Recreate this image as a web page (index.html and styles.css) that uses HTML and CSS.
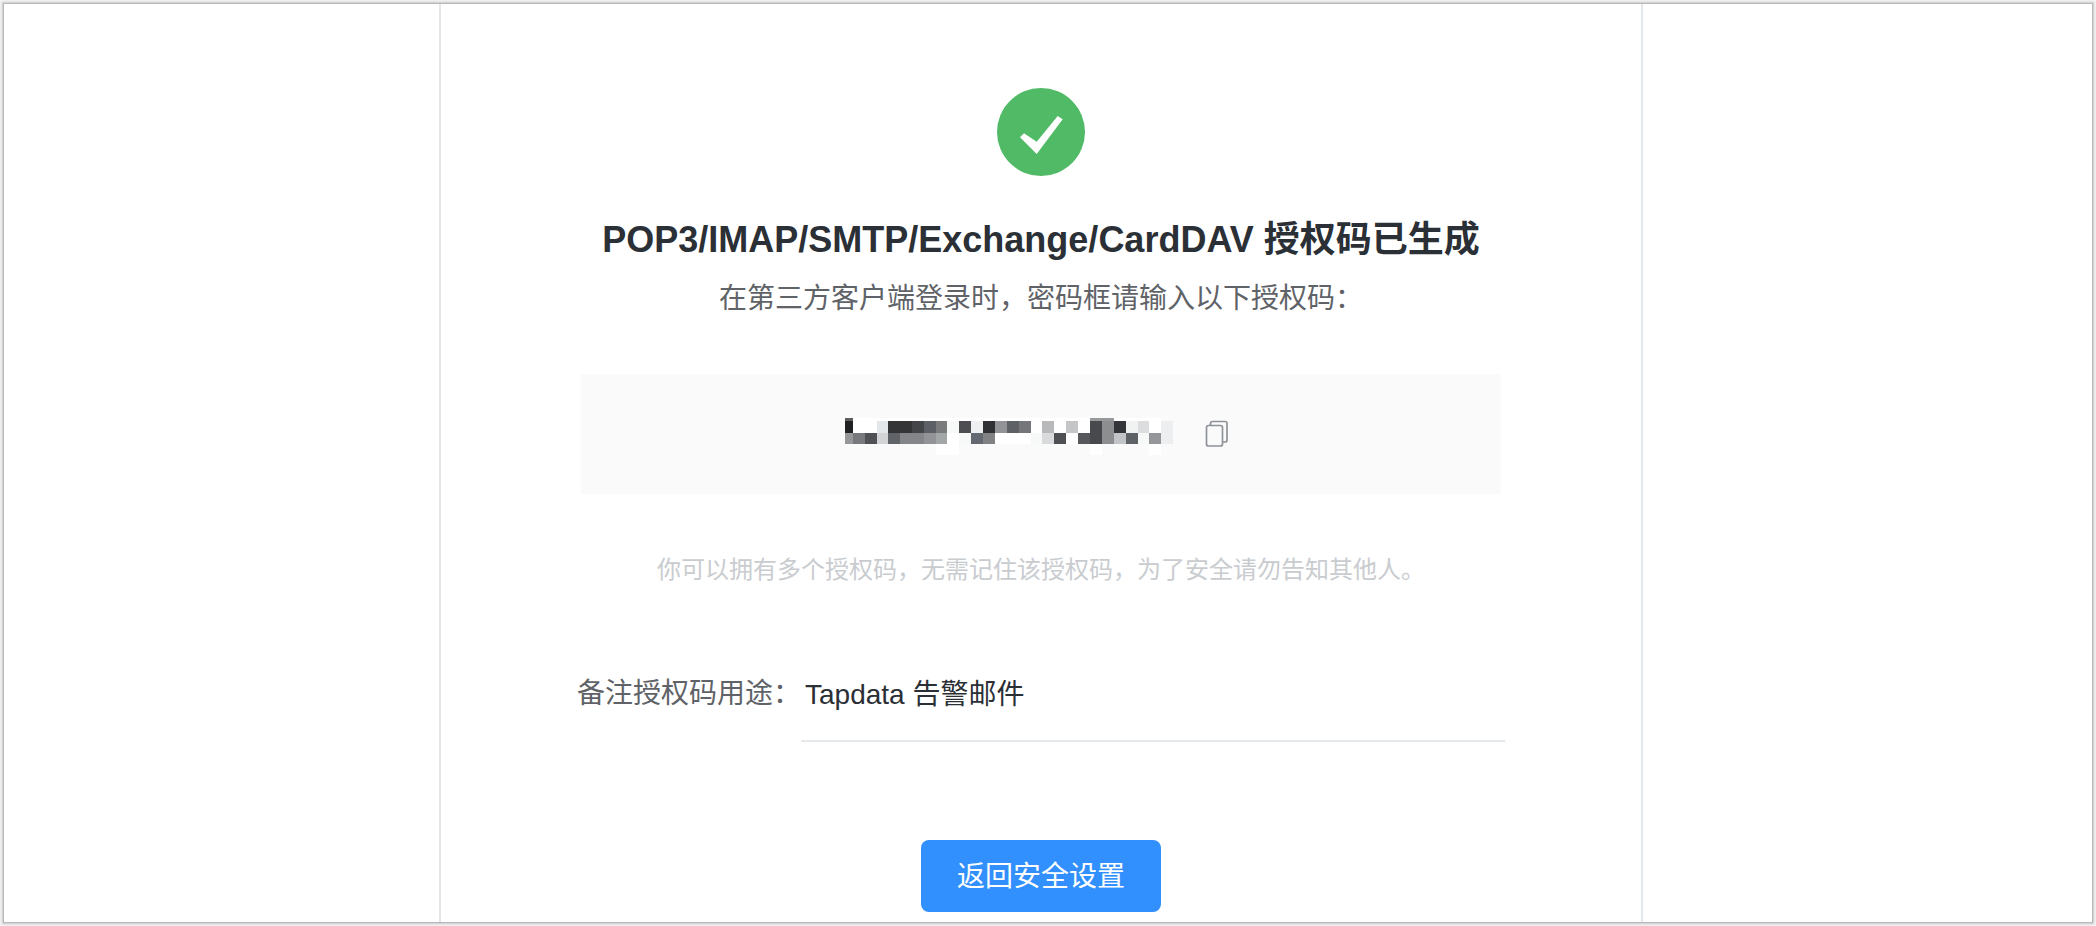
FILE: index.html
```html
<!DOCTYPE html>
<html lang="zh-CN">
<head>
<meta charset="utf-8">
<title>授权码已生成</title>
<link rel="stylesheet" href="styles.css">
</head>
<body>
<div class="window">
  <main class="card">
    <svg class="status" viewBox="0 0 88 88" aria-hidden="true">
      <circle cx="44" cy="44" r="44" fill="#50ba66"/>
      <path d="M23 49.3 27 45.3 39.7 53.7 60.7 28 65.7 31.3 39.7 66Z" fill="#fff"/>
    </svg>
    <h1 class="title">POP3/IMAP/SMTP/Exchange/CardDAV 授权码已生成</h1>
    <p class="subtitle">在第三方客户端登录时，密码框请输入以下授权码：</p>
    <div class="code">
      <svg class="code-mask" viewBox="0 -6 329 44" shape-rendering="crispEdges" role="img" aria-label="授权码">
        <path fill="#fff" d="M8 0H317V26H8ZM92 26H115V37H92ZM246 26H258V37H246ZM305 26H317V37H305Z"/>
        <path fill="#f7f8f8" d="M103 3H115V15H103ZM115 15H127V26H115ZM187 15H198V26H187ZM294 15H305V26H294Z"/>
        <path fill="#5c5e60" d="M1 0H9V3H1Z"/><path fill="#202122" d="M1 3H9V15H1Z"/>
        <path fill="#969799" d="M1 15H9V26H1Z"/><path fill="#77797c" d="M9 15H21V26H9Z"/><path fill="#4f5154" d="M21 15H33V26H21Z"/>
        <path fill="#e4e7ea" d="M33 3H44V15H33Z"/><path fill="#d3d4d6" d="M33 15H44V26H33Z"/>
        <path fill="#343537" d="M44 3H68V15H44Z"/><path fill="#444548" d="M68 3H80V15H68Z"/><path fill="#5d5f66" d="M80 3H92V15H80Z"/><path fill="#797b7d" d="M92 3H103V15H92Z"/>
        <path fill="#606468" d="M44 15H56V26H44Z"/><path fill="#838588" d="M56 15H80V26H56Z"/><path fill="#929397" d="M80 15H92V26H80Z"/><path fill="#a2a6a7" d="M92 15H103V26H92Z"/>
        <path fill="#4c4e51" d="M115 3H127V15H115Z"/><path fill="#eef0f2" d="M127 3H139V15H127Z"/><path fill="#303134" d="M139 3H151V15H139Z"/><path fill="#929396" d="M151 3H163V15H151Z"/><path fill="#5e6267" d="M163 3H175V15H163Z"/><path fill="#747679" d="M175 3H187V15H175Z"/>
        <path fill="#646870" d="M127 15H139V26H127Z"/><path fill="#808284" d="M139 15H151V26H139Z"/>
        <path fill="#b7b9ba" d="M198 3H210V15H198Z"/><path fill="#d9dadc" d="M198 15H210V26H198Z"/>
        <path fill="#4e5053" d="M210 15H222V26H210Z"/><path fill="#c3c5c6" d="M222 3H234V15H222Z"/>
        <path fill="#56585b" d="M234 15H246V26H234Z"/><path fill="#97999b" d="M246 0H270V3H246Z"/>
        <path fill="#47494c" d="M246 3H258V26H246Z"/><path fill="#8c8e90" d="M258 3H270V26H258Z"/>
        <path fill="#343538" d="M270 3H282V15H270Z"/><path fill="#c3c4c8" d="M270 15H282V26H270Z"/>
        <path fill="#f1f3f3" d="M282 3H294V15H282Z"/><path fill="#5e6165" d="M282 15H294V26H282Z"/>
        <path fill="#dbdddf" d="M294 3H305V15H294Z"/><path fill="#949699" d="M305 15H317V26H305Z"/>
        <path fill="#eceef0" d="M317 3H329V26H317Z"/>
      </svg>
      <button class="copy" type="button" aria-label="复制">
        <svg class="copy-icon" viewBox="0 0 24 28" aria-hidden="true">
          <g fill="none" stroke="#8f9399" stroke-width="1.7">
            <rect x="1.5" y="5.5" width="16" height="20.5" rx="2"/>
            <path d="M5.5 5.5V3.5a2 2 0 0 1 2-2H20a2 2 0 0 1 2 2V20a2 2 0 0 1-2 2H17.5"/>
          </g>
        </svg>
      </button>
    </div>
    <p class="hint">你可以拥有多个授权码，无需记住该授权码，为了安全请勿告知其他人。</p>
    <form class="remark">
      <label class="remark-label" for="remark">备注授权码用途：</label>
      <input class="remark-input" id="remark" type="text" value="Tapdata 告警邮件">
    </form>
    <button class="back" type="button">返回安全设置</button>
  </main>
</div>
</body>
</html>
```
FILE: styles.css
```css
* {
  box-sizing: border-box;
}

body {
  margin: 0;
  padding: 4px;
  min-height: 100vh;
  display: flex;
  background: #f3f3f3;
  font-family: "Liberation Sans", "Noto Sans CJK SC", sans-serif;
  color: #2b2f36;
}

.window {
  flex: 1;
  display: flex;
  justify-content: center;
  padding-right: 14px;
  background: #fff;
  box-shadow: 0 0 0 1px #b8b8b8, 0 0 2px 2px #c8c8c8;
}

.card {
  width: 100%;
  max-width: 1204px;
  padding: 84px 16px 10px;
  display: flex;
  flex-direction: column;
  align-items: center;
  border: solid #e2e7eb;
  border-width: 0 2px;
}

.status {
  width: 88px;
  height: 88px;
}

.title {
  margin: 40px 0 0;
  font-size: 36px;
  line-height: 48px;
  font-weight: 700;
  text-align: center;
}

.subtitle {
  margin: 15px 0 0;
  font-size: 28px;
  line-height: 40px;
  color: #5f6368;
  text-align: center;
}

.code {
  width: 100%;
  max-width: 920px;
  height: 120px;
  margin-top: 55px;
  padding-right: 10px;
  display: flex;
  align-items: center;
  justify-content: center;
  gap: 32px;
  background: #fafafa;
}

.code-mask {
  width: 329px;
  height: 44px;
}

.copy {
  padding: 0;
  border: 0;
  background: none;
  display: flex;
}

.copy-icon {
  width: 24px;
  height: 28px;
}

.hint {
  margin: 60px 0 0;
  font-size: 24px;
  line-height: 32px;
  color: #c9cccf;
  text-align: center;
}

.remark {
  width: 100%;
  max-width: 928px;
  margin-top: 62px;
  display: flex;
}

.remark-label {
  font-size: 28px;
  line-height: 92px;
  color: #5f6368;
}

.remark-input {
  flex: 1;
  min-width: 0;
  height: 94px;
  padding: 0 4px 4px;
  border: 0;
  border-bottom: 2px solid #e6e9eb;
  background: none;
  font: 28px "Liberation Sans", "Noto Sans CJK SC", sans-serif;
  color: #2b2f36;
}

.back {
  width: 240px;
  height: 72px;
  margin-top: 98px;
  padding: 0 0 4px;
  border: 0;
  border-radius: 8px;
  background: #318ffe;
  font: 28px "Noto Sans CJK SC", sans-serif;
  color: #fff;
}
```
